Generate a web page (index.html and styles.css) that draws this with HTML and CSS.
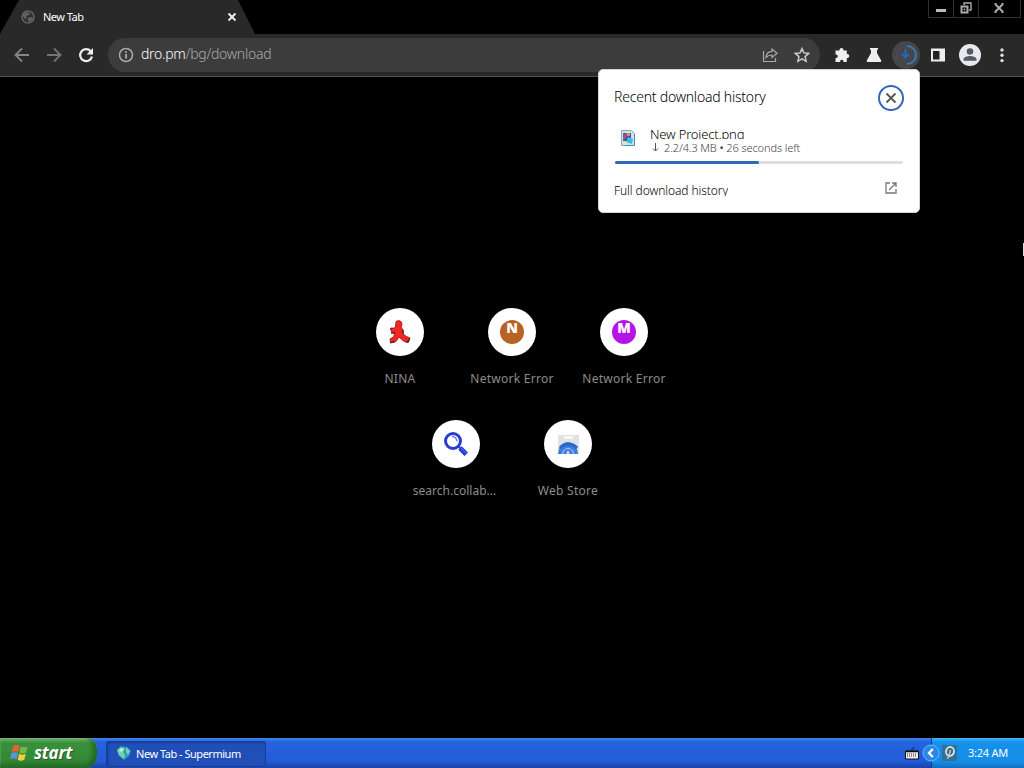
FILE: index.html
```html
<!DOCTYPE html>
<html lang="en">
<head>
  <meta charset="UTF-8" />
  <meta name="viewport" content="width=device-width, initial-scale=1.0"/>
  <title>New Tab</title>
  <link rel="stylesheet" href="styles.css">
</head>
<body>
  <div class="desktop">
    <header class="tab-strip">
      <div class="tab">
        <svg class="tab-icon" width="14" height="14" viewBox="0 0 14 14"><circle cx="7" cy="7" r="6" fill="#303030" stroke="#626262" stroke-width="1.5"/><path d="M2 4 5 2l4 1-1 2-3 1 1 2-2 1-2-3zM7 8l4-1 1 2-3 3-2-1z" fill="#626262"/></svg>
        <span class="tab-title">New Tab</span>
        <svg width="10" height="10" viewBox="0 0 10 10"><path d="m1.5 1.5 7 7m0-7-7 7" stroke="#eee" stroke-width="2"/></svg>
      </div>
      <div class="window-controls">
        <span class="control"><svg width="12" height="12" viewBox="0 0 12 12"><path d="M1 8.5h10" stroke="#bbb" stroke-width="3"/></svg></span>
        <span class="control"><svg width="12" height="12" viewBox="0 0 12 12" fill="none" stroke="#aaa"><path d="M4 3V1h7v7H9" stroke-width="1.4"/><path d="M1.5 4.5h6v6h-6z" stroke-width="2"/><path d="M4 7h1v1H4z"/></svg></span>
        <span class="control close"><svg width="12" height="12" viewBox="0 0 12 12"><path d="m2 2 8 8m0-8-8 8" stroke="#aaa" stroke-width="2"/><path d="M1.5 1.5h2m5 0h2m-9 9h2m5 0h2" stroke="#aaa"/></svg></span>
      </div>
    </header>

    <nav class="toolbar">
      <span class="tool"><svg width="16" height="16" viewBox="0 0 16 16" fill="none" stroke="#858585" stroke-width="1.8"><path d="M15 8H2m6-6.5L1.5 8 8 14.5"/></svg></span>
      <span class="tool"><svg width="16" height="16" viewBox="0 0 16 16" fill="none" stroke="#757575" stroke-width="1.8"><path d="M1 8h13M8 1.5 14.5 8 8 14.5"/></svg></span>
      <span class="tool"><svg width="16" height="16" viewBox="0 0 16 16"><path d="M12.7 4.2A6 6 0 1 0 14 9.5" fill="none" stroke="#eee" stroke-width="2.2"/><path d="M15 1v6.5H8.5z" fill="#eee"/></svg></span>
      <div class="omnibox">
        <svg class="info" width="16" height="16" viewBox="0 0 16 16"><circle cx="8" cy="8" r="6.5" fill="none" stroke="#aaa" stroke-width="1.5"/><path d="M7.1 7h1.8v4.500H7.1zM7.1 4.2h1.800V6H7.100z" fill="#aaa"/></svg>
        <span class="url">dro.pm<span class="path">/bg/download</span></span>
        <span class="tool"><svg width="16" height="16" viewBox="0 0 16 16" fill="none" stroke="#aaa" stroke-width="1.2"><path d="M1.5 4v10.500h12V11"/><path d="M4 10.500c.3-4 2.500-6 6-6.200V2l5 4.300-5 4.200V8c-3 0-4.500.8-6 2.500z"/></svg></span>
        <span class="tool"><svg width="16" height="16" viewBox="0 0 16 16"><path d="m8 1.600 1.900 4.300 4.700.5-3.500 3.200 1 4.700L8 11.900l-4.100 2.400 1-4.700-3.500-3.200 4.700-.5z" fill="none" stroke="#ccc" stroke-width="1.5"/></svg></span>
      </div>
      <span class="tool"><svg width="16" height="16" viewBox="0 0 16 16"><path d="M1.500 3.500h4V3a2 2 0 0 1 4 0v.5h3.300V7h.5a2 2 0 0 1 0 4h-.5v4H9.500v-.6a1.700 1.700 0 0 0-3.400 0v.6H1.500v-4H2a1.800 1.800 0 0 0 0-3.600h-.5z" fill="#eee"/></svg></span>
      <span class="tool"><svg width="16" height="16" viewBox="0 0 16 16"><path d="M4 1h8v1.800h-1V6l4.200 7.400q.5 1.600-1.200 1.600H2q-1.700 0-1.200-1.600L5 6V2.800H4z" fill="#eee"/></svg></span>
      <span class="tool downloading"><svg width="28" height="28" viewBox="0 0 28 28"><circle cx="14" cy="14" r="14" fill="#454648"/><path d="M15 5a9 9 0 0 1 0 18" fill="none" stroke="#3a79b4" stroke-width="2"/><path d="M14 5a9 9 0 0 0-7 14.600" fill="none" stroke="#484b53" stroke-width="2"/><path d="M13.500 8v8m-3.500-3 3.500 3.500L17 13" fill="none" stroke="#2467bd" stroke-width="2"/></svg></span>
      <span class="tool"><svg width="16" height="16" viewBox="0 0 16 16"><path d="M1 1.500h14v13H1z" fill="#eee"/><path d="M3 4h6.500v8.500H3z" fill="#242424"/></svg></span>
      <span class="tool"><svg width="22" height="22" viewBox="0 0 22 22"><circle cx="11" cy="11" r="11" fill="#e8e9ef"/><circle cx="11" cy="7.500" r="3.300" fill="#555a64"/><path d="M4.500 16.700v-1.500c0-2.200 4-3.200 6.500-3.200s6.500 1 6.500 3.200v1.500z" fill="#555a64"/></svg></span>
      <span class="tool"><svg width="16" height="16" viewBox="0 0 16 16" fill="#ddd"><circle cx="8" cy="3" r="1.700"/><circle cx="8" cy="8.300" r="1.700"/><circle cx="8" cy="13.600" r="1.700"/></svg></span>
    </nav>

    <main class="page">
      <div class="shortcuts">
        <div class="shortcut">
          <span class="disc"><svg width="24" height="24" viewBox="0 0 24 24"><path d="M8 1.500q3-2 5.500.5l.5 3-1 2 2 3v4l3.500 2.500 3.500 1.500-2.500 4.500-4-1.500-4.500-4L8 21.500 2.500 23 2 19l3.500-2L7 12.500H4L2.500 9l5-1.500z" fill="#f02823" stroke="#b81e20"/><path d="m2.500 9 2-1M2.500 22.500l4-1m11.500 0 2 .6 1.700-3.500M15 10v4M3 13h4" fill="none" stroke="#542532" stroke-width="1.500"/></svg></span>
          <span class="label">NINA</span>
        </div>
        <div class="shortcut">
          <span class="disc"><span class="letter brown">N</span></span>
          <span class="label">Network Error</span>
        </div>
        <div class="shortcut">
          <span class="disc"><span class="letter purple">M</span></span>
          <span class="label">Network Error</span>
        </div>
      </div>
      <div class="shortcuts">
        <div class="shortcut">
          <span class="disc"><svg width="24" height="24" viewBox="0 0 24 24"><circle cx="9" cy="9" r="7.500" fill="#fff" stroke="#293dd4" stroke-width="3"/><path d="m14.500 14.500 2 2" stroke="#293dd4" stroke-width="2"/><path d="m16 16 6.300 6.300" stroke="#293dd4" stroke-width="5"/><path d="m17 16 5.500 5.500" stroke="#6574df"/><path d="M8 4.500a5 5 0 0 1 5 5" fill="none" stroke="#6f7de7" stroke-width="1.300"/></svg></span>
          <span class="label search">search.collab...</span>
        </div>
        <div class="shortcut">
          <span class="disc"><svg width="24" height="24" viewBox="0 0 24 24"><path d="M2 3h21v19H2z" fill="#e1e3e3"/><path d="M8 5.500h9" stroke="#fff" stroke-width="2"/><path d="M2 22a10 12 0 0 1 20 0z" fill="#3d7be0"/><path d="M4 16a10 8 0 0 1 17 0" fill="none" stroke="#2b66cb" stroke-width="3"/><path d="M6.500 22a5.500 5.500 0 0 1 11 0" fill="none" stroke="#91b8f1" stroke-width="1.500" stroke-dasharray="5 1"/><circle cx="12" cy="20.500" r="1.500" fill="#c6dcfa"/></svg></span>
          <span class="label">Web Store</span>
        </div>
      </div>
    </main>

    <footer class="taskbar">
      <div class="start">
        <svg width="20" height="20" viewBox="0 0 20 20"><path d="M3 3q3.500-2 6.500 0L8.200 9q-3-1.700-6.500 0z" fill="#e86132"/><path d="M10.700 3.500q3 1.700 6.800 0L16 9.500q-3.500 1.700-6.600 0z" fill="#75ba46"/><path d="M1.400 10.300q3.500-2 6.500 0l-1.300 6q-3-2-6.500 0z" fill="#5d91e6"/><path d="M9.100 10.800q3 1.700 6.700 0l-1.500 6q-3.500 1.700-6.500 0z" fill="#f5ce3c"/></svg>
        <span class="start-text">start</span>
      </div>
      <div class="task">
        <svg width="16" height="16" viewBox="0 0 16 16"><path d="M1 5 5 1l6 1 4 4-2 5-5 4-5-4z" fill="#3798b5"/><path d="m1 5 4-3 4 2-2 3 2 3-1 4-5-4zM10 2l4 4-2 4-2-3z" fill="#6bd6ad"/><path d="m5 3 3 1-2 3-3-1z" fill="#b6f2da"/></svg>
        <span>New Tab - Supermium</span>
      </div>
      <div class="quick">
        <svg width="14" height="13" viewBox="0 0 14 13"><path d="M7 4V1h3" fill="none" stroke="#162f75"/><path d="M.5 4h13v8H.5z" fill="#eee" stroke="#111"/><path d="M1 4.500h12" stroke="#111" stroke-width="1.500"/><path d="M2 7h10M2 9h10" stroke="#222" stroke-dasharray="1 1"/></svg>
      </div>
      <div class="tray">
        <svg class="expand" width="18" height="18" viewBox="0 0 18 18"><circle cx="9" cy="9" r="8" fill="#2c88e6" stroke="#65b7ff"/><path d="M10.800 5 7 9l3.800 4" fill="none" stroke="#fff" stroke-width="2.200"/></svg>
        <svg class="tray-icon" width="15" height="16" viewBox="0 0 15 16"><path d="M0 0h15v16H0z" fill="#356f96"/><ellipse cx="8" cy="6.500" rx="4" ry="4.500" transform="rotate(15 8 6.500)" fill="#426a7c" stroke="#d8e5e7" stroke-width="1.800"/><path d="M8.500 5 7 10.500 5.500 14" fill="none" stroke="#b7ced5" stroke-width="1.400"/></svg>
        <span class="clock">3:24 AM</span>
      </div>
    </footer>

    <section class="downloads">
      <div class="downloads-head">
        <h2>Recent download history</h2>
        <svg width="28" height="28" viewBox="0 0 28 28"><circle cx="14" cy="14" r="12" fill="#fff" stroke="#3569b5" stroke-width="2"/><path d="m9.500 9.500 9 9m0-9-9 9" stroke="#555" stroke-width="1.800"/></svg>
      </div>
      <div class="file">
        <svg class="file-icon" width="16" height="18" viewBox="0 0 16 18"><path d="M1.500 1.500h10l3 3v12h-13z" fill="#c5e5f3" stroke="#86a9c2"/><path d="M3 4h8v8H3z" fill="#3157ab"/><path d="m3 4 4 3-2 3-2 1z" fill="#b3487e"/><path d="m8 8 5 2-1 5-6-2z" fill="#43b9dc"/><path d="M6 4h4v3H7z" fill="#ed8c45"/><path d="M3 12h3v3H3z" fill="#e8e79e"/><path d="M14.500 5v11.500H5" fill="none" stroke="#4b91b5"/></svg>
        <div>
          <div class="file-name">New Project.png</div>
          <div class="file-status"><svg width="7" height="9" viewBox="0 0 7 9"><path d="M3.500 0v8M1 5.500 3.500 8 6 5.500" fill="none" stroke="#555"/></svg><span>2.2/4.3 MB <b>•</b> 26 seconds left</span></div>
        </div>
      </div>
      <div class="progress"><div class="progress-value" style="width: 50%"></div></div>
      <div class="full-history">
        <span>Full download history</span>
        <svg width="12" height="12" viewBox="0 0 12 12" fill="none" stroke="#777" stroke-width="1.300"><path d="M5 1H1v10h10V7M7 1h4v4M11 1 4 8"/></svg>
      </div>
    </section>
    <div class="pointer"></div>
  </div>
</body>
</html>
```

FILE: styles.css
```css
* {
  box-sizing: border-box;
}

body {
  margin: 0;
  background: #000;
  font-family: "Noto Sans", "Open Sans", sans-serif;
  color: #fff;
}

svg {
  display: block;
  flex: none;
}

.desktop {
  position: relative;
  display: flex;
  flex-direction: column;
  width: 1024px;
  height: 768px;
  overflow: hidden;
}

.tab-strip {
  display: flex;
  justify-content: space-between;
  height: 34px;
}

.tab {
  display: flex;
  align-items: center;
  width: 255px;
  padding: 0 18px 0 21px;
  background: #292929;
  clip-path: polygon(19px 0, 238px 0, 255px 34px, 0 34px);
}

.tab-title {
  flex: 1;
  margin-left: 8px;
  padding-bottom: 2px;
  font-size: 11px;
  letter-spacing: -0.5px;
}

.window-controls {
  display: flex;
  width: 93px;
  height: 18px;
  margin-right: 3px;
  border: 1px solid #303030;
  border-top: 0;
}

.control {
  display: flex;
  justify-content: center;
  width: 25px;
  padding: 2px 1px 0 0;
  border-right: 1px solid #303030;
}

.control.close {
  width: 40px;
  border: 0;
}

.toolbar {
  display: flex;
  align-items: center;
  height: 43px;
  padding: 0 6px;
  background: #292929;
  border-bottom: 1px solid #555;
}

.tool {
  display: flex;
  align-items: center;
  justify-content: center;
  width: 32px;
  flex: none;
}

.omnibox {
  display: flex;
  align-items: center;
  width: 712px;
  height: 34px;
  margin: 0 6px;
  padding: 0 2px 0 10px;
  border-radius: 17px;
  background: #3c3c3c;
}

.url {
  flex: 1;
  margin-left: 7px;
  padding-bottom: 2px;
  font-size: 14px;
  font-weight: 300;
  line-height: 20px;
  letter-spacing: -0.27px;
}

.path {
  color: #aaa;
}

.page {
  flex: 1;
  padding-top: 231px;
}

.shortcuts {
  display: flex;
  justify-content: center;
  height: 112px;
}

.shortcut {
  display: flex;
  flex-direction: column;
  align-items: center;
  width: 112px;
}

.disc {
  display: flex;
  align-items: center;
  justify-content: center;
  width: 48px;
  height: 48px;
  border-radius: 50%;
  background: #fff;
}

.letter {
  width: 24px;
  height: 24px;
  border-radius: 50%;
  text-align: center;
  font-family: "Open Sans", sans-serif;
  font-size: 14px;
  font-weight: 800;
  line-height: 15px;
}

.brown {
  background: #b86225;
}

.purple {
  background: #b714e7;
}

.label {
  margin-top: 14px;
  color: #8c8c8c;
  font-size: 12px;
  line-height: 18px;
  letter-spacing: 0.27px;
}

.label.search {
  margin-right: 3px;
  letter-spacing: 0;
}

.taskbar {
  display: flex;
  height: 30px;
  background: linear-gradient(#3d87ee, #2563dd 4px, #245bd8 23px, #1b43aa);
  font-size: 11px;
}

.start {
  display: flex;
  align-items: center;
  width: 97px;
  padding-left: 10px;
  border-radius: 0 10px 12px 0;
  background: linear-gradient(#68b568, #38913a 5px, #338935 22px, #28732b);
  box-shadow: inset -4px -2px 5px #236526, inset 0 1px 2px #8bc58b;
}

.start-text {
  margin-left: 4px;
  font-family: "Open Sans", sans-serif;
  font-size: 17px;
  font-style: italic;
  font-weight: 700;
  line-height: 24px;
  letter-spacing: -0.2px;
  text-shadow: 1px 1px 1px #245629;
}

.task {
  display: flex;
  align-items: center;
  gap: 4px;
  width: 160px;
  height: 26px;
  margin: 3px 0 0 9px;
  padding: 0 0 2px 9px;
  border: 1px solid #173f9b;
  border-radius: 2px;
  background: #204fb8;
  box-shadow: inset 1px 1px 2px #163b91;
  letter-spacing: -0.48px;
  white-space: nowrap;
}

.quick {
  display: flex;
  align-items: center;
  justify-content: flex-end;
  flex: 1;
  padding-right: 12px;
}

.tray {
  display: flex;
  align-items: center;
  width: 93px;
  border-left: 1px solid #123d88;
  background: linear-gradient(#46b5f5, #1591ea 4px, #148de6 24px, #126dc0);
}

.expand {
  margin-left: -10px;
}

.tray-icon {
  margin-left: 2px;
}

.clock {
  margin-left: 11px;
  padding-bottom: 1px;
  letter-spacing: -0.25px;
}

/* download bubble sits over the toolbar and page */
.downloads {
  position: absolute;
  top: 69px;
  left: 598px;
  width: 322px;
  height: 144px;
  padding: 15px 16px;
  border: 1px solid #d5d5d5;
  border-radius: 5px;
  background: #fff;
  color: #000;
}

.downloads-head {
  display: flex;
  align-items: center;
  justify-content: space-between;
  height: 28px;
  margin: -1px -2px 0 -1px;
}

.downloads h2 {
  margin: 0;
  padding-bottom: 2px;
  font-size: 14px;
  font-weight: 300;
  line-height: 20px;
  letter-spacing: -0.22px;
}

.file {
  display: flex;
  gap: 14px;
  height: 33px;
  margin-top: 14px;
  padding-left: 5px;
}

.file-icon {
  margin-top: 3px;
}

.file-name {
  height: 14px;
  overflow: hidden;
  font-size: 13px;
  font-weight: 300;
  line-height: 18px;
  letter-spacing: -0.17px;
  margin-top: -1px;
}

.file-status {
  display: flex;
  align-items: center;
  gap: 5px;
  margin-top: 2px;
  padding-left: 2px;
  color: #444;
  font-size: 11px;
  font-weight: 300;
  line-height: 13px;
  letter-spacing: -0.1px;
}

.progress {
  height: 3px;
  margin-top: 2px;
  border-radius: 2px;
  background: #dedede;
}

.progress-value {
  height: 3px;
  border-radius: 2px;
  background: #3268ba;
}

.full-history {
  display: flex;
  align-items: flex-start;
  justify-content: space-between;
  margin-top: 18px;
  padding-right: 6px;
  font-size: 12px;
  font-weight: 300;
}

.full-history span {
  margin-left: -1px;
  height: 14px;
  overflow: hidden;
  line-height: 17px;
  letter-spacing: -0.08px;
}

.pointer {
  position: absolute;
  top: 243px;
  right: 0;
  width: 1px;
  height: 13px;
  background: #ddd;
}
```
